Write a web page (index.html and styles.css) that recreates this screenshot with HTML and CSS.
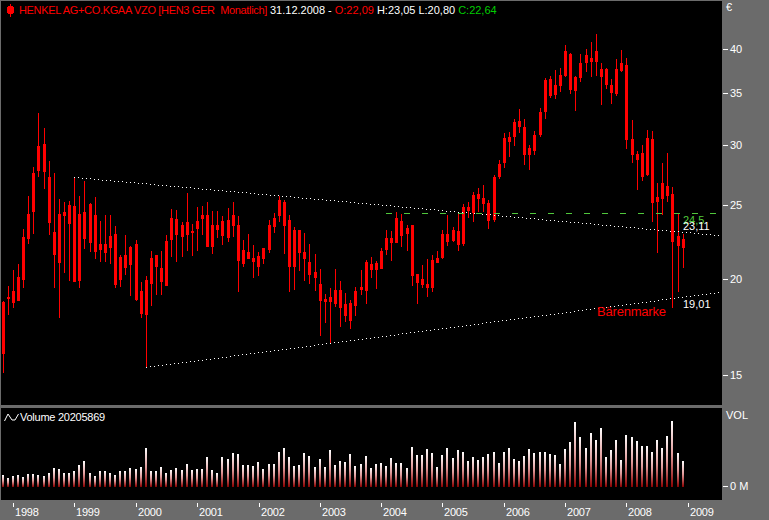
FILE: index.html
```html
<!DOCTYPE html>
<html>
<head>
    <title>HENKEL AG+CO.KGAA VZO</title>
    <link rel="stylesheet" href="styles.css">
</head>
<body>
    <div id="chart">
        <!-- Price panel -->
        <div id="price-panel" class="panel">
            <div id="legend">
                <svg class="legend-icon" width="7" height="14" viewBox="0 0 7 14">
                    <rect x="3" y="1" width="1" height="13" fill="#ff0000"></rect>
                    <rect x="1" y="3" width="5" height="8" fill="#ff0000"></rect>
                    <rect x="0" y="4" width="7" height="6" fill="#ff0000"></rect>
                </svg>
                <span class="red name">HENKEL AG+CO.KGAA VZO [HEN3 GER  Monatlich]</span>
                <span>31.12.2008 -</span>
                <span class="red">O:22,09</span>
                <span>H:23,05</span>
                <span>L:20,80</span>
                <span class="green">C:22,64</span>
            </div>
            <svg id="price-chart" width="721" height="404" viewBox="1 1 721 404" shape-rendering="crispEdges"></svg>
        </div>
        <div id="price-axis" class="axis"><span class="unit">€</span></div>

        <!-- Volume panel -->
        <div id="volume-panel" class="panel">
            <div id="volume-legend">
                <svg width="15" height="9" viewBox="0 0 15 9">
                    <path d="M0.5 8 L4 1 L8 7 L11 7 L14.5 1" fill="none" stroke="#ffffff"></path>
                </svg>
                <span>Volume 20205869</span>
            </div>
            <svg id="volume-chart" width="721" height="92" viewBox="1 408 721 92" shape-rendering="crispEdges">
                <defs>
                    <linearGradient id="volume-fill" x1="0" y1="0" x2="0" y2="1">
                        <stop offset="0" stop-color="#ffffff"></stop>
                        <stop offset="0.5" stop-color="#e09a9a"></stop>
                        <stop offset="1" stop-color="#8a0000"></stop>
                    </linearGradient>
                </defs>
            </svg>
        </div>
        <div id="volume-axis" class="axis">
            <span class="unit vol-label">VOL</span>
            <span class="level vol-zero">0 M</span>
        </div>

        <!-- Time axis -->
        <div id="time-axis"></div>
    </div>

    <script src="chart.js"></script>
</body>
</html>
```

FILE: styles.css
```css
body {
    background-color: #6b6b6b;
    color: #FFF;
    font-family: "Liberation Sans", Arial, sans-serif;
    font-size: 11px;
    line-height: 13px;
    margin: 0;
    padding: 1px 0 0 1px;
    overflow: hidden;
}
svg {
    display: block;
}
#chart {
    display: grid;
    grid-template-columns: 721px 47px;
    grid-template-rows: 404px 95px 20px;
}
.panel {
    position: relative;
    background-color: #000;
}
.panel svg text {
    font-family: "Liberation Sans", Arial, sans-serif;
    font-size: 11px;
}
#volume-panel {
    margin-top: 3px;
}
.axis, #time-axis {
    position: relative;
}
#legend {
    position: absolute;
    top: 2px;
    left: 6px;
    display: flex;
    align-items: center;
    gap: 3px;
    white-space: pre;
}
#volume-legend {
    position: absolute;
    top: 3px;
    left: 3px;
    display: flex;
    align-items: center;
    gap: 1px;
    letter-spacing: -0.25px;
    white-space: pre;
}
.legend-icon {
    margin-right: 2px;
}
.name {
    letter-spacing: -0.33px;
}
.red {
    color: #FF0000;
}
.green {
    color: #00CC00;
}
.unit {
    position: absolute;
    left: 4px;
    top: 0;
}
.vol-label {
    top: 4px;
}
.level {
    position: absolute;
    left: 1px;
    margin-top: -6px;
    padding-left: 7px;
}
.level::before {
    content: "";
    position: absolute;
    left: 0;
    top: 6px;
    width: 5px;
    height: 1px;
    background-color: #FFF;
}
.vol-zero {
    top: 81px;
}
.year {
    position: absolute;
    top: 3px;
    padding-left: 2px;
    padding-top: 3px;
    letter-spacing: -0.2px;
}
.year::before {
    content: "";
    position: absolute;
    left: 0;
    top: 0;
    width: 1px;
    height: 4px;
    background-color: #FFF;
}
```

FILE: chart.js
```js
// Monthly candles in chart pixels: high, body top, body bottom, low
var candles = [
    [301,302,354,373],[286,297,299,315],[270,291,303,308],[264,277,301,301],[229,237,280,288],
    [196,214,239,244],[167,173,212,234],[113,146,171,177],[128,144,172,189],[161,177,223,235],
    [173,232,255,288],[199,214,263,318],[202,212,216,273],[201,205,224,281],[177,206,282,282],
    [196,214,281,288],[181,212,239,249],[203,204,243,252],[197,215,252,259],[221,244,250,262],
    [215,244,253,262],[215,236,248,264],[226,234,285,288],[255,257,280,287],[235,255,268,275],
    [246,247,265,296],[240,244,300,301],[282,291,314,318],[276,280,315,368],[251,258,284,306],
    [255,255,267,295],[251,268,282,295],[235,241,286,286],[209,218,240,257],[210,219,235,262],
    [222,225,237,257],[193,222,235,251],[224,231,233,256],[207,221,229,251],[206,215,219,235],
    [202,215,247,247],[211,225,247,254],[211,225,230,238],[216,221,236,245],[208,220,238,242],
    [202,215,226,237],[216,225,261,292],[240,250,264,267],[234,252,259,259],[245,258,262,278],
    [252,256,267,276],[248,248,259,264],[220,225,250,253],[213,218,227,233],[196,200,216,222],
    [200,202,226,254],[215,220,267,292],[227,230,267,290],[230,230,253,271],[233,252,259,281],
    [244,262,275,284],[254,272,278,291],[269,284,301,336],[294,299,302,323],[288,297,302,344],
    [269,290,304,307],[281,290,308,327],[293,304,316,322],[300,303,321,329],[287,291,306,316],
    [270,287,290,295],[260,262,291,304],[257,264,270,278],[261,263,270,289],[248,251,269,269],
    [230,238,250,255],[231,238,243,261],[212,218,243,243],[214,221,236,247],[225,228,234,251],
    [225,225,276,286],[274,274,283,304],[265,279,285,288],[259,284,288,297],[255,260,288,292],
    [251,258,263,263],[230,234,258,259],[215,234,242,246],[227,230,241,242],[214,231,245,251],
    [204,207,244,246],[202,207,211,218],[192,195,213,222],[188,194,199,212],[185,198,204,212],
    [200,203,221,229],[175,177,220,222],[160,164,177,179],[133,138,163,168],[132,137,142,157],
    [119,122,137,146],[109,121,127,133],[119,127,155,165],[145,148,155,170],[131,135,151,155],
    [108,112,135,137],[78,80,112,119],[76,79,96,98],[70,85,95,99],[68,75,86,92],
    [45,51,76,77],[53,54,90,94],[76,77,91,111],[54,63,78,82],[49,55,63,72],
    [42,58,62,77],[34,51,62,76],[63,69,77,105],[68,69,85,89],[79,85,93,104],
    [59,69,94,96],[50,63,71,72],[58,65,140,149],[120,139,155,163],[151,154,160,190],
    [145,153,177,181],[130,138,175,176],[131,139,203,222],[183,197,202,253],[163,183,199,215],
    [153,186,196,202],[187,194,242,308],[214,236,246,292],[234,239,248,268]
];

// Volume bar heights in pixels, one per candle
var volumes = [
    12,9,11,12,10,13,13,12,11,14,19,18,14,14,16,22,26,14,11,16,
    16,14,12,16,16,19,18,20,39,16,16,20,14,17,19,17,23,17,18,18,
    30,17,14,30,28,34,33,22,22,21,25,18,23,23,35,39,30,21,22,34,
    31,20,28,20,37,22,26,25,33,21,23,31,19,23,24,21,29,24,24,19,
    40,32,32,38,34,20,32,39,29,37,35,26,30,27,30,33,35,24,35,39,
    28,26,31,38,34,35,35,33,32,23,38,45,65,50,39,54,47,59,30,37,
    47,27,52,50,46,41,41,35,47,39,51,66,34,26
];

var years = [
    [1998, 13], [1999, 74], [2000, 136], [2001, 197], [2002, 259], [2003, 320],
    [2004, 381], [2005, 442], [2006, 504], [2007, 565], [2008, 626], [2009, 688]
];

var SVG_NS = "http://www.w3.org/2000/svg";
var priceChart = document.getElementById("price-chart");
var volumeChart = document.getElementById("volume-chart");

function addRect(parent, x, y, w, h, fill) {
    var rect = document.createElementNS(SVG_NS, "rect");
    rect.setAttribute("x", x);
    rect.setAttribute("y", y);
    rect.setAttribute("width", w);
    rect.setAttribute("height", h);
    rect.setAttribute("fill", fill);
    parent.appendChild(rect);
}

function addLabel(x, y, text, fill, size) {
    var label = document.createElementNS(SVG_NS, "text");
    label.setAttribute("x", x);
    label.setAttribute("y", y);
    label.setAttribute("fill", fill);
    if (size) {
        label.setAttribute("style", "font-size:" + size + "px;letter-spacing:-0.2px");
    }
    label.textContent = text;
    priceChart.appendChild(label);
}

// Column of a month on the chart
function columnOf(i) {
    return Math.floor(3.1 + i * 5.11364);
}

// Price to pixel on the log scale
function priceY(price) {
    return 375 - 332.4 * Math.log(price / 15);
}

// Dotted trend line, one pixel every 4 columns
function drawTrend(x1, y1, x2, y2) {
    for (var x = x1; x <= x2; x += 4) {
        var y = y1 + (y2 - y1) * (x - x1) / (x2 - x1);
        addRect(priceChart, x, Math.round(y), 1, 1, "#FFFFFF");
    }
}

candles.forEach(function(c, i) {
    var col = columnOf(i);
    addRect(priceChart, col, c[0], 1, c[3] - c[0], "#FF0000");
    addRect(priceChart, col - 1, c[1], 3, c[2] - c[1], "#FF0000");
    addRect(volumeChart, col - 1, 487 - volumes[i], 2, volumes[i], "url(#volume-fill)");
});

drawTrend(74, 177, 718, 235);
drawTrend(146, 367, 719, 292);

// Resistance level at 24,5
for (var x = 386; x < 718; x += 18) {
    addRect(priceChart, x, 213, 6, 1, "#50C83C");
}

addLabel(683, 224, "24,5", "#50C83C");
addLabel(683, 230, "23,11", "#FFFFFF");
addLabel(683, 308, "19,01", "#FFFFFF");
addLabel(597, 316, "Bärenmarke", "#FF0000", 13);

// Price axis levels
var priceAxis = document.getElementById("price-axis");
[40, 35, 30, 25, 20, 15].forEach(function(price) {
    var level = document.createElement("span");
    level.className = "level";
    level.style.top = Math.round(priceY(price) - 1) + "px";
    level.textContent = price;
    priceAxis.appendChild(level);
});

// Year ticks under the volume panel
var timeAxis = document.getElementById("time-axis");
years.forEach(function(y) {
    var year = document.createElement("span");
    year.className = "year";
    year.style.left = (y[1] - 1) + "px";
    year.textContent = y[0];
    timeAxis.appendChild(year);
});
```
